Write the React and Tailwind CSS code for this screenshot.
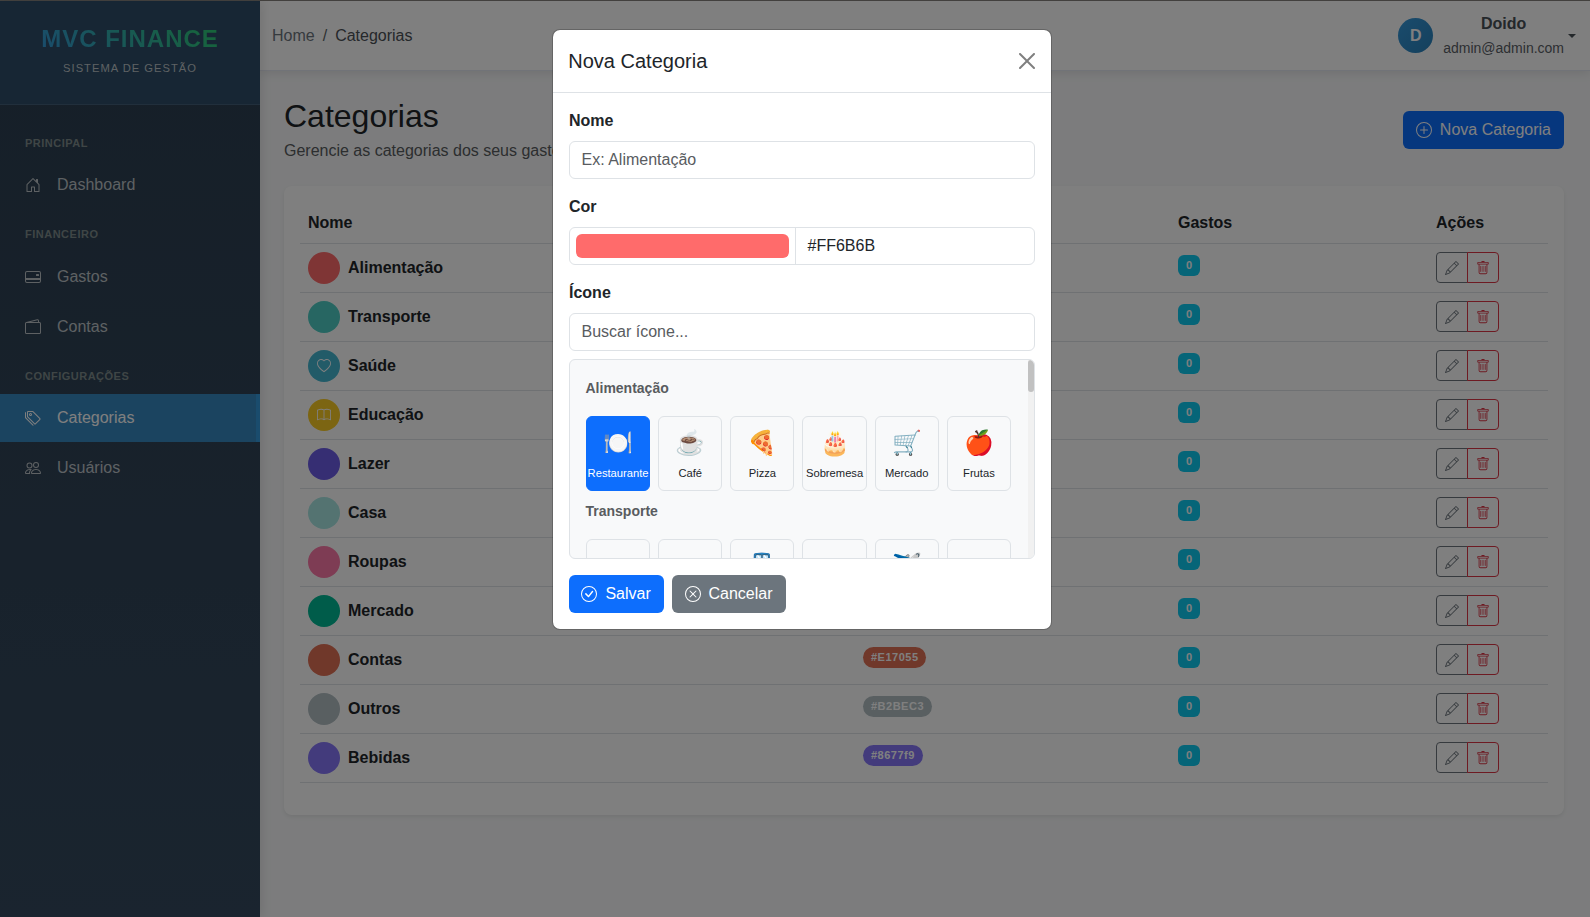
import {
  BsHouseDoor, BsCreditCard2Back, BsWallet2, BsTags, BsPeople, BsPlusCircle, BsCheckCircle,
  BsXCircle, BsHeart, BsBook, BsPencil, BsTrash,
} from 'react-icons/bs'

const rows = [
  { name: 'Alimentação', color: '#FF6B6B' },
  { name: 'Transporte', color: '#4ECDC4' },
  { name: 'Saúde', color: '#45B7D1', Icon: BsHeart },
  { name: 'Educação', color: '#F9CA24', Icon: BsBook },
  { name: 'Lazer', color: '#6C5CE7' },
  { name: 'Casa', color: '#A8E6E3' },
  { name: 'Roupas', color: '#FD79A8' },
  { name: 'Mercado', color: '#00B894' },
  { name: 'Contas', color: '#E17055' },
  { name: 'Outros', color: '#B2BEC3' },
  { name: 'Bebidas', color: '#8677f9' },
]

function Heading({ children, className }) {
  return (
    <div className={`px-[25px] text-[11px] leading-[17px] font-bold tracking-[0.5px] text-[#7f8c8d] ${className}`}>
      {children}
    </div>
  )
}

function NavItem({ Icon, label, active, className = '' }) {
  return (
    <a
      className={`flex h-[48px] items-center pl-[25px] ${
        active ? 'border-r-4 border-[#3498db] bg-[#3788c0] text-white' : 'text-[#bdc3c7]'
      } ${className}`}
    >
      <Icon className="mr-4 size-4" />
      <span>{label}</span>
    </a>
  )
}

function Sidebar() {
  return (
    <aside className="z-10 flex w-[260px] shrink-0 flex-col bg-[linear-gradient(180deg,#2c3e50,#34495e)] shadow-[2px_0_10px_rgba(0,0,0,0.1)]">
      <div className="h-[104px] border-b border-white/10 bg-[#2e4d69] pt-[23px] text-center">
        <div className="mx-auto w-fit bg-[linear-gradient(45deg,#3498db,#2ecc71)] bg-clip-text text-[24px] leading-[29px] font-bold tracking-[1px] text-transparent">
          MVC FINANCE
        </div>
        <div className="mt-[6px] text-[11.2px] leading-[18px] tracking-[1px] text-[#bdc3c7]">SISTEMA DE GESTÃO</div>
      </div>
      <Heading className="mt-[30px]">PRINCIPAL</Heading>
      <NavItem Icon={BsHouseDoor} label="Dashboard" className="mt-[9px]" />
      <Heading className="mt-[17px]">FINANCEIRO</Heading>
      <NavItem Icon={BsCreditCard2Back} label="Gastos" className="mt-[10px]" />
      <NavItem Icon={BsWallet2} label="Contas" className="mt-[2px]" />
      <Heading className="mt-[17px]">CONFIGURAÇÕES</Heading>
      <NavItem Icon={BsTags} label="Categorias" active className="mt-[9px]" />
      <NavItem Icon={BsPeople} label="Usuários" className="mt-[2px]" />
    </aside>
  )
}

function Topbar() {
  return (
    <header className="flex h-[70px] shrink-0 items-center justify-between border-b border-[#e3e6f0] bg-white pr-[14px] pl-3 shadow-[0_2px_10px_rgba(0,0,0,0.1)]">
      <nav className="flex gap-2">
        <span className="text-[#6c757d]">Home</span>
        <span className="text-[#5a5f64]">/</span>
        <span className="text-[#4b5056]">Categorias</span>
      </nav>
      <div className="flex items-center">
        <span className="mr-[10px] flex size-[35px] items-center justify-center rounded-full bg-[linear-gradient(135deg,#3498db,#2980b9)] font-bold text-white">
          D
        </span>
        <span className="text-center text-[#495057]">
          <span className="block leading-6 font-bold">Doido</span>
          <span className="block text-[14px] leading-6 text-[#5a6066]">admin@admin.com</span>
        </span>
        <span className="ml-1 size-0 border-x-[4.8px] border-t-[4.8px] border-x-transparent border-t-[#495057]" />
      </div>
    </header>
  )
}

function Table() {
  return (
    <section className="mt-[22px] rounded-lg bg-white px-4 pt-4 pb-8 shadow-[0_2px_4px_rgba(0,0,0,0.075)]">
      <table className="w-full table-fixed border-collapse text-left text-[#212529]">
        <colgroup>
          <col className="w-[555px]" />
          <col className="w-[315px]" />
          <col className="w-[258px]" />
          <col />
        </colgroup>
        <thead>
          <tr className="h-[41px] border-b border-[#dee2e6]">
            <th className="px-2 pt-[2px]">Nome</th>
            <th className="px-2 pt-[2px]">Cor</th>
            <th className="px-2 pt-[2px]">Gastos</th>
            <th className="px-2 pt-[2px]">Ações</th>
          </tr>
        </thead>
        <tbody>
          {rows.map(({ name, color, Icon }) => (
            <tr key={name} className="h-[49px] border-b border-[#dee2e6]">
              <td className="px-2">
                <div className="flex items-center">
                  <span className="mr-2 flex size-8 items-center justify-center rounded-full text-white" style={{ backgroundColor: color }}>
                    {Icon && <Icon className="size-[14px]" />}
                  </span>
                  <strong>{name}</strong>
                </div>
              </td>
              <td className="px-2 pb-1">
                <span className="block w-fit rounded-full py-1 pr-[7.8px] pl-2 text-[11px] leading-[13px] font-bold tracking-[0.5px] text-white" style={{ backgroundColor: color }}>
                  {color}
                </span>
              </td>
              <td className="px-2 pb-1">
                <span className="block w-[22px] rounded-md bg-[#0dcaf0] py-1 text-center text-[11px] leading-[13px] font-bold text-white">0</span>
              </td>
              <td className="px-2">
                <div className="flex">
                  <span className="flex h-[31px] w-8 items-center justify-center rounded-l border border-[#6c757d] text-[#6c757d]">
                    <BsPencil className="size-[14px]" />
                  </span>
                  <span className="-ml-px flex h-[31px] w-8 items-center justify-center rounded-r border border-[#dc3545] text-[#dc3545]">
                    <BsTrash className="size-[14px]" />
                  </span>
                </div>
              </td>
            </tr>
          ))}
        </tbody>
      </table>
    </section>
  )
}

function Tile({ emoji, label, active }) {
  return (
    <div
      className={`flex h-[75px] flex-col items-center rounded-md border pt-[8px] ${
        active ? 'border-[#0d6efd] bg-[#0d6efd] text-white' : 'border-[#dee2e6] text-[#212529]'
      }`}
    >
      <span className="h-[36px] text-[24px] leading-[36px]">{emoji}</span>
      <span className="mt-[4px] text-[11.2px] leading-[17px]">{label}</span>
    </div>
  )
}

const food = [['🍽️', 'Restaurante'], ['☕', 'Café'], ['🍕', 'Pizza'], ['🎂', 'Sobremesa'], ['🛒', 'Mercado'], ['🍎', 'Frutas']]
const transport = ['', '', '🚆', '', '✈️', '']

function Field({ children }) {
  return <div className="flex h-[38px] items-center rounded-md border border-[#dee2e6] px-[11.5px] text-[#595c5f]">{children}</div>
}

function Modal() {
  return (
    <div className="w-[500px] rounded-lg border border-black/20 bg-white bg-clip-padding text-[#212529]">
      <div className="flex h-[63px] items-center justify-between border-b border-[#dee2e6] pr-4 pl-[15.3px]">
        <h5 className="text-[20px] leading-[30px]">Nova Categoria</h5>
        <svg viewBox="0 0 16 16" className="size-4 text-black/50" fill="currentColor">
          <path d="M.293.293a1 1 0 0 1 1.414 0L8 6.586 14.293.293a1 1 0 1 1 1.414 1.414L9.414 8l6.293 6.293a1 1 0 0 1-1.414 1.414L8 9.414l-6.293 6.293a1 1 0 0 1-1.414-1.414L6.586 8 .293 1.707a1 1 0 0 1 0-1.414z" />
        </svg>
      </div>
      <div className="px-4 pt-4 pb-4">
        <label className="mb-2 block leading-6 font-bold">Nome</label>
        <Field>Ex: Alimentação</Field>
        <label className="mt-4 mb-2 block leading-6 font-bold">Cor</label>
        <div className="flex h-[38px] rounded-md border border-[#dee2e6]">
          <div className="w-[226px] shrink-0 border-r border-[#dee2e6] p-[6px]">
            <div className="h-6 rounded-md bg-[#ff6b6b]" />
          </div>
          <div className="flex items-center px-[11.5px]">#FF6B6B</div>
        </div>
        <label className="mt-4 mb-2 block leading-6 font-bold">Ícone</label>
        <Field>Buscar ícone...</Field>
        <div className="mt-2 flex h-[200px] overflow-hidden rounded-md border border-[#dee2e6] bg-[#f8f9fa]">
          <div className="flex-1 pt-4 pr-[17px] pl-4">
            <div className="mt-[2px] -ml-[0.5px] text-[14px] leading-[21px] font-bold text-[#595c5f]">Alimentação</div>
            <div className="mt-[17px] grid grid-cols-6 gap-2">
              {food.map(([emoji, label], i) => (
                <Tile key={label} emoji={emoji} label={label} active={i === 0} />
              ))}
            </div>
            <div className="mt-[10px] -ml-[0.5px] text-[14px] leading-[21px] font-bold text-[#595c5f]">Transporte</div>
            <div className="mt-[17px] grid grid-cols-6 gap-2">
              {transport.map((emoji, i) => (
                <Tile key={i} emoji={emoji} label="" />
              ))}
            </div>
          </div>
          <div className="w-[6px] bg-[#f1f1f1]">
            <div className="h-8 rounded-[3px] bg-[#c1c1c1]" />
          </div>
        </div>
        <div className="mt-4 flex gap-2 text-white">
          <button className="flex h-[38px] w-[95px] items-center gap-2 rounded-md bg-[#0d6efd] pl-[12.4px]">
            <BsCheckCircle /> Salvar
          </button>
          <button className="flex h-[38px] w-[114px] items-center gap-2 rounded-md bg-[#6c757d] pl-[12.5px]">
            <BsXCircle /> Cancelar
          </button>
        </div>
      </div>
    </div>
  )
}

export default function App() {
  return (
    <div className="relative h-[917px] w-[1590px] overflow-hidden font-['Liberation_Sans',Arial,sans-serif] text-[16px] leading-6">
      <div className="flex h-full border-t border-[#8a8680] bg-[#f8f9fa]">
        <Sidebar />
        <div className="flex flex-1 flex-col">
          <Topbar />
          <main className="px-6 pr-[26px] pt-[26px]">
            <div className="flex items-center justify-between">
              <div>
                <h1 className="text-[32px] leading-[38px] text-[#212529]">Categorias</h1>
                <p className="mt-[4px] pb-px text-[#595c5f]">Gerencie as categorias dos seus gastos</p>
              </div>
              <button className="mb-[2px] flex h-[38px] items-center gap-2 rounded-md bg-[#0d6efd] px-[13px] text-white">
                <BsPlusCircle /> Nova Categoria
              </button>
            </div>
            <Table />
          </main>
        </div>
      </div>
      <div className="absolute inset-0 z-20 flex items-start justify-center bg-black/50 pt-[29px] pl-[14px]">
        <Modal />
      </div>
    </div>
  )
}
